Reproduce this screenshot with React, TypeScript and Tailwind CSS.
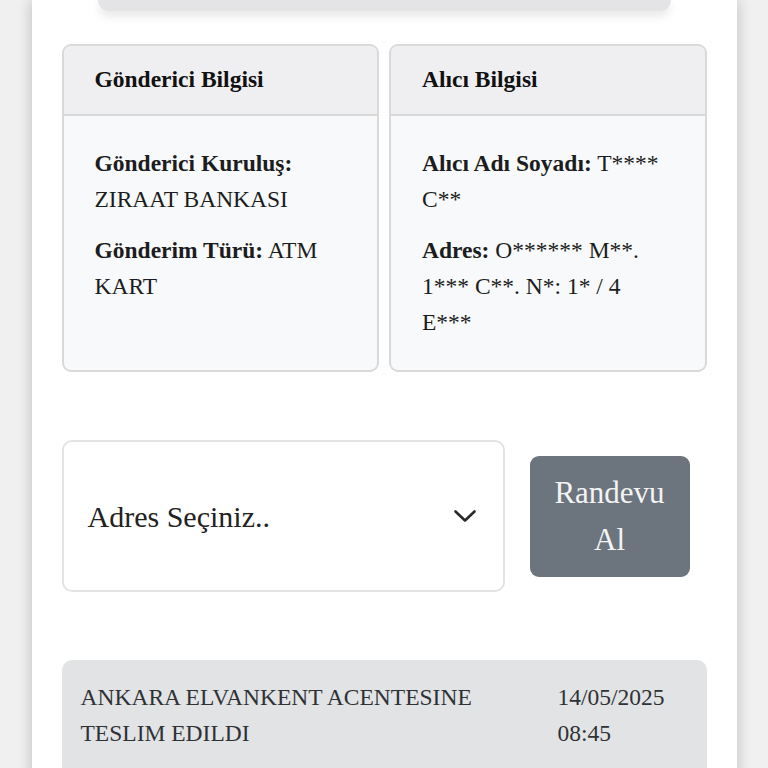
const serif = { fontFamily: '"Liberation Serif", "Times New Roman", serif' };

interface InfoCardProps {
  title: string;
  rows: { label: string; value: string }[];
}

const InfoCard = ({ title, rows }: InfoCardProps) => (
  <div className="flex flex-col rounded-[9px] border-2 border-[#d9d9d9] bg-[#f8f9fa] overflow-hidden">
    <div className="h-[70px] flex items-center px-[31px] bg-[#efeff1] border-b-2 border-[#d9d9d9]">
      <span className="text-[23.5px] font-bold text-[#111]">{title}</span>
    </div>
    <div className="flex-1 pl-[31px] pr-[38px] pt-[29px] pb-[30px] flex flex-col gap-[15px]">
      {rows.map((row) => (
        <p key={row.label} className="text-[23.5px] leading-[36px] text-[#1b1d20]">
          <strong className="font-bold">{row.label}</strong> {row.value}
        </p>
      ))}
    </div>
  </div>
);

const App = () => {
  return (
    <div className="min-h-screen bg-[#f0f0f0] flex justify-center" style={serif}>
      <div className="w-[705px] min-h-screen bg-white shadow-[0_0_14px_rgba(0,0,0,0.22)] px-[30px]">
        {/* card cut off at the top */}
        <div className="mx-[36px] h-[11px] rounded-b-[26px] bg-[#e4e4e6] shadow-[0_5px_10px_rgba(0,0,0,0.10)]" />

        {/* sender / receiver */}
        <div className="mt-[33px] grid grid-cols-2 gap-[10px]">
          <InfoCard
            title="Gönderici Bilgisi"
            rows={[
              { label: 'Gönderici Kuruluş:', value: 'ZIRAAT BANKASI' },
              { label: 'Gönderim Türü:', value: 'ATM KART' },
            ]}
          />
          <InfoCard
            title="Alıcı Bilgisi"
            rows={[
              { label: 'Alıcı Adı Soyadı:', value: 'T**** C**' },
              { label: 'Adres:', value: 'O****** M**. 1*** C**. N*: 1* / 4 E***' },
            ]}
          />
        </div>

        {/* address select + appointment */}
        <div className="mt-[68px] flex items-center gap-[25px]">
          <div className="w-[443px] h-[152px] rounded-[10px] border-2 border-[#e3e3e3] bg-white flex items-center justify-between pl-[24px] pr-[26px]">
            <span className="text-[30px] text-[#222]">Adres Seçiniz..</span>
            <svg width="24" height="14" viewBox="0 0 24 14" fill="none">
              <polyline
                points="2.5,2.5 12,11.5 21.5,2.5"
                stroke="#2a2a2a"
                strokeWidth="2.6"
                strokeLinecap="round"
                strokeLinejoin="round"
              />
            </svg>
          </div>
          <button className="w-[160px] h-[121px] rounded-[9px] bg-[#6c757d] px-[18px] text-[31px] leading-[47px] text-[#f3f3f3] text-center">
            Randevu Al
          </button>
        </div>

        {/* movement list */}
        <div className="mt-[68px] rounded-[10px] bg-[#e2e3e5] pl-[19px] pr-[19px] pt-[19px] pb-[40px] flex text-[23.5px] leading-[36px] text-[#2f3235]">
          <div className="flex-1 pr-[40px]">ANKARA ELVANKENT ACENTESINE TESLIM EDILDI</div>
          <div className="w-[130px]">14/05/2025 08:45</div>
        </div>
      </div>
    </div>
  );
};

export default App;
